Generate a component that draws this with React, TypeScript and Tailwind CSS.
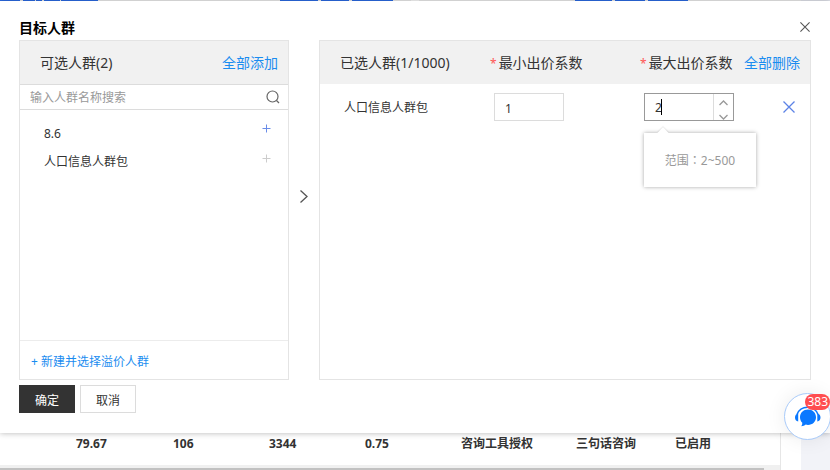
import { useState } from "react";
import { clsx } from "clsx";

const available = [
  { name: "8.6", added: false },
  { name: "人口信息人群包", added: true },
];

const stats = [
  { value: "79.67", width: "w-[97px]" },
  { value: "106", width: "w-24" },
  { value: "3344", width: "w-24" },
  { value: "0.75", width: "w-24" },
  { value: "咨询工具授权", width: "w-[115px]" },
  { value: "三句话咨询", width: "w-[99px]" },
  { value: "已启用", width: "w-[105px]" },
];

const TopStrip = () => {
  return (
    <div className="flex h-px bg-[#f0f0f0]">
      <span className="w-5 bg-[#2b6de8]" />
      <span className="ml-[3px] w-3 bg-[#2b6de8]" />
      <span className="ml-px w-1.5 bg-[#2b6de8]" />
      <span className="ml-0.5 w-4 bg-[#2b6de8]" />
      <span className="ml-px w-[37px] bg-[#2b6de8]" />
      <span className="ml-[182px] w-[38px] bg-[#2b6de8]" />
      <span className="ml-[3px] w-7 bg-[#2b6de8]" />
      <span className="ml-[3px] w-[41px] bg-[#2b6de8]" />
      <span className="ml-[18px] w-2 bg-white" />
      <span className="ml-[156px] w-[37px] bg-[#2b6de8]" />
      <span className="ml-[3px] w-[30px] bg-[#2b6de8]" />
      <span className="ml-[3px] w-10 bg-[#2b6de8]" />
      <span className="ml-auto w-[29px] bg-[#e6e8f0]" />
    </div>
  );
};

const Cross = ({ className }: { className?: string }) => {
  return (
    <svg
      viewBox="0 0 12 12"
      fill="none"
      stroke="currentColor"
      strokeWidth="1.3"
      className={className}
    >
      <path d="M0.5 0.5 11.5 11.5M11.5 0.5 0.5 11.5" />
    </svg>
  );
};

const AvailablePanel = () => {
  return (
    <section className="flex w-[270px] shrink-0 flex-col border border-[#e4e4e4]">
      <header className="flex h-[43px] items-center justify-between bg-[#f1f1f1] pr-2.5 pl-5 text-sm">
        <h2>可选人群(2)</h2>
        <button className="text-[#1a8cf0]">全部添加</button>
      </header>
      <label className="flex h-[26px] items-center border-y border-[#dcdcdc] pr-2 pl-2.5">
        <input
          type="text"
          aria-label="搜索人群"
          placeholder="输入人群名称搜索"
          className="min-w-0 flex-1 pt-0.5 outline-none placeholder:text-[#999]"
        />
        <svg
          viewBox="0 0 14 14"
          fill="none"
          stroke="#666"
          strokeWidth="1.2"
          className="size-3.5 shrink-0"
        >
          <circle cx="6.5" cy="6.5" r="5.5" />
          <path d="m10.5 10.5 2.5 2.5" />
        </svg>
      </label>
      <ul className="flex-1 pt-2.5 pr-4 pl-6">
        {available.map((item) => (
          <li key={item.name} className="flex h-7 justify-between">
            <span className="leading-7">{item.name}</span>
            <button
              aria-label={`添加 ${item.name}`}
              disabled={item.added}
              className={clsx(
                "flex size-3 items-center justify-center self-start",
                item.added ? "mt-1 text-[#ccc]" : "mt-0.5 text-[#6a8ce8]"
              )}
            >
              <svg
                viewBox="0 0 9 9"
                fill="none"
                stroke="currentColor"
                className="size-[9px]"
              >
                <path d="M4.5 0.5v8M0.5 4.5h8" />
              </svg>
            </button>
          </li>
        ))}
      </ul>
      <footer className="flex h-[39px] items-center border-t border-[#ececec] px-[11px] pt-1">
        <a href="#new" className="text-[#1a8cf0]">
          + 新建并选择溢价人群
        </a>
      </footer>
    </section>
  );
};

const SelectedPanel = () => {
  const [min, setMin] = useState("1");
  const [max, setMax] = useState("2");
  return (
    <section className="min-w-0 flex-1 border border-[#e4e4e4]">
      <table className="w-full table-fixed text-left">
        <thead>
          <tr className="h-[43px] bg-[#f1f1f1] text-sm">
            <th className="w-[170px] pl-5 font-normal">已选人群(1/1000)</th>
            <th className="w-[150px] font-normal">
              <span className="mr-0.5 text-xs text-[#f55]">*</span>
              最小出价系数
            </th>
            <th className="w-[95px] font-normal whitespace-nowrap">
              <span className="mr-0.5 text-xs text-[#f55]">*</span>
              最大出价系数
            </th>
            <th className="pr-2.5 text-right font-normal">
              <button className="text-[#1a8cf0]">全部删除</button>
            </th>
          </tr>
        </thead>
        <tbody>
          <tr className="h-[46px]">
            <td className="pt-0.5 pl-6">人口信息人群包</td>
            <td className="pl-1">
              <input
                type="text"
                aria-label="最小出价系数"
                value={min}
                onChange={(e) => setMin(e.target.value)}
                className="block h-7 w-[70px] border border-[#dcdcdc] px-2.5 pt-0.5 outline-none"
              />
            </td>
            <td className="pl-1">
              <div className="relative flex h-7 w-[90px] border border-[#999]">
                <input
                  type="text"
                  aria-label="最大出价系数"
                  value={max}
                  onChange={(e) => setMax(e.target.value)}
                  className="w-[68px] pt-0.5 pl-2.5 outline-none"
                />
                <span className="absolute top-[5px] left-4 h-4 w-px bg-black" />
                <div className="flex flex-1 flex-col items-center justify-between border-l border-[#dcdcdc] pt-1.5 text-[#999]">
                  <button
                    aria-label="增加"
                    className="block"
                    onClick={() => setMax(String(Number(max) + 1))}
                  >
                    <svg
                      viewBox="0 0 9 6"
                      fill="none"
                      stroke="currentColor"
                      strokeWidth="1.3"
                      className="h-1.5 w-[9px]"
                    >
                      <path d="M0.5 5 4.5 1 8.5 5" />
                    </svg>
                  </button>
                  <button
                    aria-label="减少"
                    className="block"
                    onClick={() => setMax(String(Number(max) - 1))}
                  >
                    <svg
                      viewBox="0 0 9 6"
                      fill="none"
                      stroke="currentColor"
                      strokeWidth="1.3"
                      className="h-1.5 w-[9px]"
                    >
                      <path d="M0.5 1 4.5 5 8.5 1" />
                    </svg>
                  </button>
                </div>
                <div
                  role="tooltip"
                  className="absolute top-[39px] -left-px flex h-[54px] w-28 items-center justify-center bg-white pt-0.5 font-['Noto_Sans','Noto_Sans_CJK_TC',sans-serif] text-[#999] shadow-[0_0_4px_rgba(0,0,0,0.35)]"
                >
                  <span className="absolute -top-1 left-[15px] size-2 rotate-45 bg-white shadow-[-1px_-1px_1px_rgba(0,0,0,0.08)]" />
                  范围：2~500
                </div>
              </div>
            </td>
            <td className="pr-[15px]">
              <button
                aria-label="删除"
                className="ml-auto block text-[#5c83e6]"
              >
                <Cross className="size-3" />
              </button>
            </td>
          </tr>
        </tbody>
      </table>
    </section>
  );
};

const ChatButton = () => {
  return (
    <button
      aria-label="在线客服"
      className="absolute -right-px bottom-[30px] size-[47px] rounded-full border border-[#a9cbfa] bg-white shadow-[0_0_20px_rgba(0,0,0,0.08)]"
    >
      <svg viewBox="0 0 45 45" className="size-full">
        <path
          d="M12 20.500a11 10.500 0 0 1 21 0"
          fill="none"
          stroke="#0a78ff"
          strokeWidth="1.5"
        />
        <path
          d="M13.200 19.500v8c-2-.3-3.200-1.800-3.200-4s1.200-3.700 3.200-4zM32.300 19.500v8c2-.3 3.200-1.800 3.200-4s-1.200-3.700-3.200-4z"
          fill="#0a78ff"
        />
        <path
          d="M23 15.500c4.600 0 8 3.400 8 7.700s-3.400 7.700-8 7.700c-.8 0-1.600-.1-2.300-.3-1.200 1-2.700 1.600-4.400 1.700.8-1.100 1.100-2.300 1-3.500-1.500-1.400-2.300-3.400-2.300-5.600 0-4.300 3.400-7.700 8-7.700z"
          fill="#0a78ff"
        />
      </svg>
      <span className="absolute top-0 right-0 h-4 rounded-full bg-[#ff4d4f] px-0.5 text-xs leading-4 text-white">
        383
      </span>
    </button>
  );
};

const App = () => {
  return (
    <div className="relative flex min-h-screen flex-col overflow-hidden bg-white font-['Noto_Sans','Noto_Sans_CJK_SC',sans-serif] text-xs text-[#333]">
      <TopStrip />
      <main className="relative flex flex-1 flex-col bg-white px-[19px] pb-5 shadow-[0_0_6px_rgba(0,0,0,0.3)]">
        <div className="flex h-[39px] items-end justify-between">
          <h1 className="text-sm leading-6 font-bold text-black">目标人群</h1>
          <button aria-label="关闭" className="mr-px mb-2 text-[#555]">
            <Cross className="size-[10px]" />
          </button>
        </div>
        <div className="flex flex-1">
          <AvailablePanel />
          <div className="flex w-[30px] shrink-0 items-center justify-center pb-7">
            <svg
              viewBox="0 0 8 13"
              fill="none"
              stroke="#555"
              strokeWidth="1.3"
              className="h-[13px] w-2"
            >
              <path d="M0.5 0.5 7 6.500 0.5 12.500" />
            </svg>
          </div>
          <SelectedPanel />
        </div>
        <div className="mt-[5px] flex gap-[5px]">
          <button className="h-7 w-14 bg-[#333] pt-1 text-white">确定</button>
          <button className="h-7 w-14 border border-[#dcdcdc] pt-1">
            取消
          </button>
        </div>
      </main>
      <div className="flex h-[37px] shrink-0 bg-[#f2f3f8] pr-[29px]">
        <div className="min-w-0 flex-1 bg-white pr-5">
          <div className="border-r border-[#e6e6e6]">
            <table className="table-fixed font-bold">
              <tbody>
                <tr className="h-8">
                  <td className="w-[76px]" />
                  {stats.map((s) => (
                    <td
                      key={s.value}
                      className={clsx("pb-2.5 whitespace-nowrap", s.width)}
                    >
                      {s.value}
                    </td>
                  ))}
                </tr>
              </tbody>
            </table>
            <div className="h-[5px] bg-[#f0f0f0] pt-[3px] pr-4">
              <div className="h-0.5 bg-[#c1c1c1]" />
            </div>
          </div>
        </div>
      </div>
      <ChatButton />
    </div>
  );
};

export default App;
